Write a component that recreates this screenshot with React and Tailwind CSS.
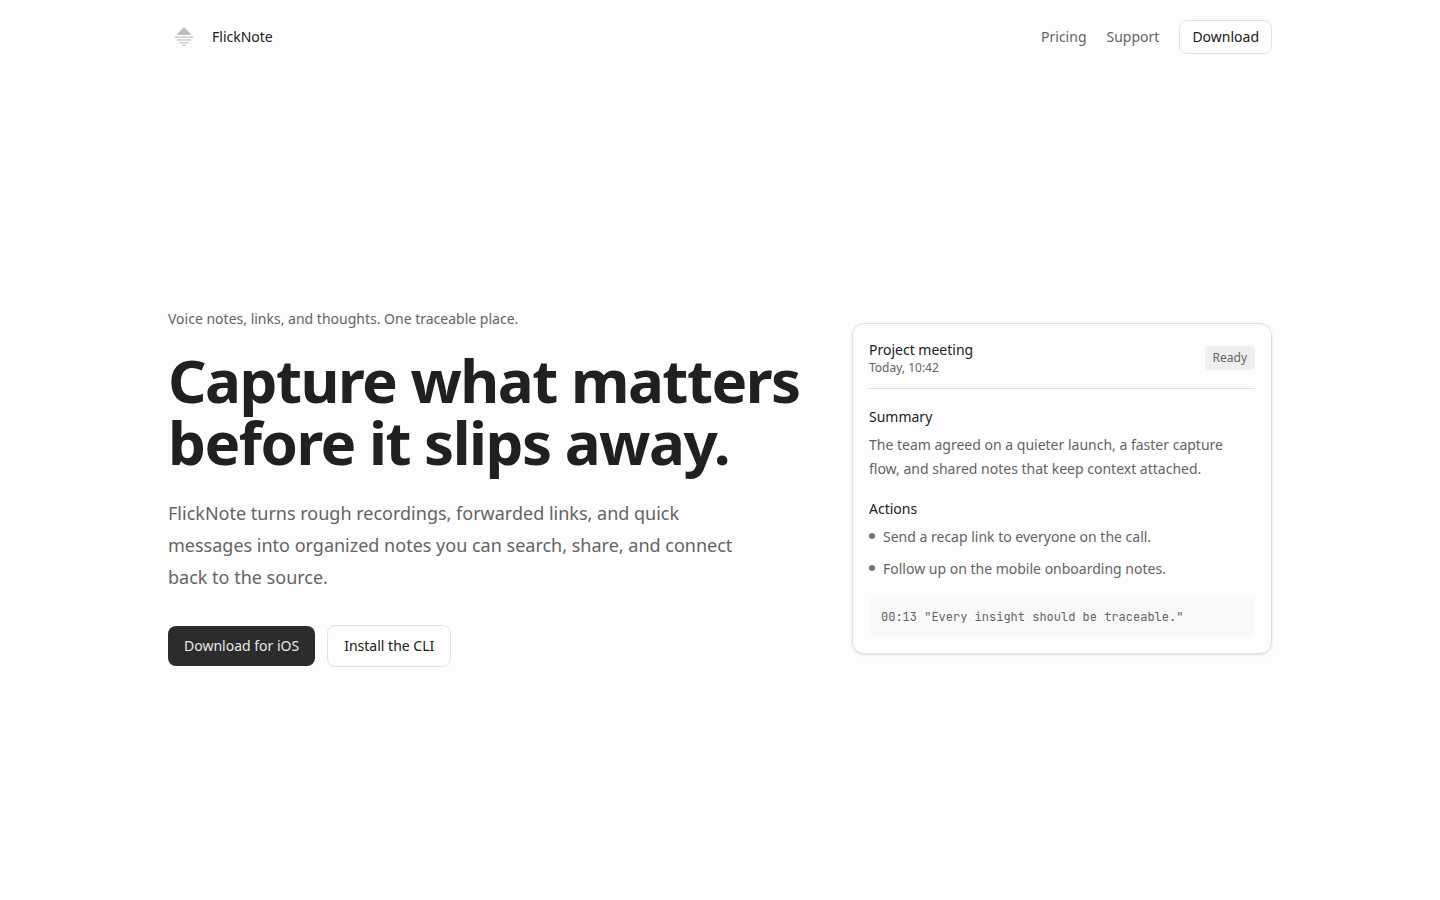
const NAV_LINKS = [
  { label: "Pricing", href: "#pricing" },
  { label: "Support", href: "#support" }
];

const ACTIONS = [
  "Send a recap link to everyone on the call.",
  "Follow up on the mobile onboarding notes."
];

function Logo() {
  return (
    <svg className="w-8 h-8" viewBox="0 0 32 32" aria-hidden="true">
      <path d="M16 6.2 22.8 13q.8 1-.6 1H9.8q-1.4 0-.6-1Z" fill="#bdbdbd" />
      <g fill="#cccccc">
        <rect x="6.5" y="15.4" width="19" height="1.5" rx="0.7" />
        <rect x="8.8" y="18.2" width="14.4" height="1.5" rx="0.7" />
        <rect x="11.2" y="21" width="9.6" height="1.4" rx="0.7" />
        <rect x="14" y="23.6" width="4" height="1.4" rx="0.7" />
      </g>
    </svg>
  );
}

function Header() {
  return (
    <header className="w-full max-w-6xl mx-auto px-6 py-5 flex items-center justify-between text-sm">
      <a href="#home" className="flex items-center gap-3 h-8">
        <Logo />
        <span>FlickNote</span>
      </a>
      <nav className="flex items-center gap-5">
        {NAV_LINKS.map((link) => (
          <a key={link.label} href={link.href} className="text-[#646464] hover:text-[#202020]">
            {link.label}
          </a>
        ))}
        <a href="#download" className="rounded-lg border border-[#e2e2e2] px-3 py-1.5">
          Download
        </a>
      </nav>
    </header>
  );
}

function NotePreview() {
  return (
    <article className="rounded-xl border border-[#e0e0e0] p-4 text-sm shadow-sm">
      <div className="flex items-center justify-between border-b border-[#e0e0e0] pb-3">
        <div>
          <h2>Project meeting</h2>
          <p className="text-xs text-[#646464]">Today, 10:42</p>
        </div>
        <span className="rounded bg-[#efefef] px-2 py-1 text-xs text-[#646464]">Ready</span>
      </div>

      <div className="flex flex-col gap-4 pt-4 leading-6">
        <section className="flex flex-col gap-1">
          <h3>Summary</h3>
          <p className="text-[#646464]">
            The team agreed on a quieter launch, a faster capture flow, and shared notes that keep context attached.
          </p>
        </section>

        <section className="flex flex-col gap-1">
          <h3>Actions</h3>
          <ul className="flex flex-col gap-2 text-[#646464]">
            {ACTIONS.map((action) => (
              <li key={action} className="flex gap-2">
                <span className="mt-2 size-1.5 shrink-0 rounded-full bg-[#777777]" />
                {action}
              </li>
            ))}
          </ul>
        </section>

        <p className="rounded-lg bg-[#f9f9f9] p-3 font-['JetBrains_Mono','Liberation_Mono',monospace] text-xs text-[#646464]">
          00:13 "Every insight should be traceable."
        </p>
      </div>
    </article>
  );
}

function App() {
  return (
    <div className="min-h-screen bg-[#fdfdfd] font-['Noto_Sans',sans-serif] text-[#202020]">
      <Header />
      <main className="w-full max-w-6xl min-h-[calc(100vh-72px)] mx-auto px-6 grid items-center gap-12 lg:grid-cols-[minmax(0,1fr)_420px]">
        <div>
          <p className="text-sm text-[#646464]">Voice notes, links, and thoughts. One traceable place.</p>
          <h1 className="mt-5 text-6xl leading-[62px] font-bold tracking-tight">
            Capture what matters before it slips away.
          </h1>
          <p className="mt-6 max-w-xl text-lg leading-8 text-[#646464]">
            FlickNote turns rough recordings, forwarded links, and quick messages into organized notes you can search,
            share, and connect back to the source.
          </p>
          <div className="mt-8 flex flex-wrap items-center gap-3 text-sm">
            <a href="#ios" className="rounded-lg bg-[#2c2c2c] px-4 py-2.5 text-[#e8e8e8]">
              Download for iOS
            </a>
            <a href="#cli" className="rounded-lg border border-[#e2e2e2] px-4 py-2.5">
              Install the CLI
            </a>
          </div>
        </div>
        <NotePreview />
      </main>
    </div>
  );
}

export default App;
